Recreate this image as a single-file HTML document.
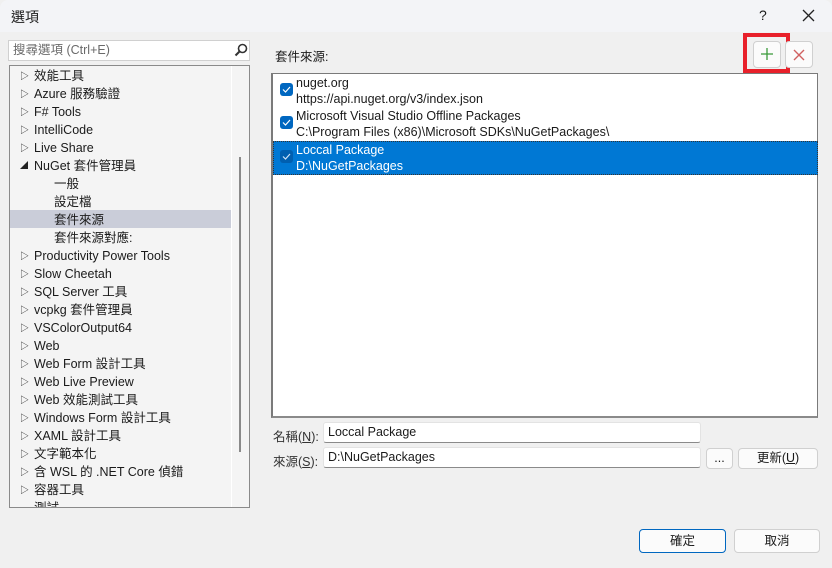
<!DOCTYPE html>
<html><head><meta charset="utf-8"><style>
*{box-sizing:border-box;margin:0;padding:0}
body{width:832px;height:568px;overflow:hidden;background:#f0f0f0;font-family:"Liberation Sans","Noto Sans CJK TC",sans-serif;font-size:12.5px;color:#1a1a1a;position:relative}
.abs{position:absolute}
.title{left:0;top:0;width:832px;height:32px;background:#f3f4f7;border-radius:8px 8px 0 0}
.tree{left:9px;top:65px;width:241px;height:443px;background:#f4f4f4;border:1px solid #8a8a8a;overflow:hidden}
.ti{position:absolute;left:0;height:18px;line-height:18px;width:222px;white-space:nowrap}
.ti .ar{position:absolute;left:10px;top:0;font-size:9px;color:#222}
.ti .t{position:absolute;left:24px}
.ti .s{position:absolute;left:44px}
.inp{background:#fff;border:1px solid #e3e3e3;border-bottom:1px solid #8a8a8a;border-radius:3px;padding-left:4px;line-height:19px;height:21px}
.btn{background:#fbfbfb;border:1px solid #d0d0d0;border-radius:4px;text-align:center}
.cb{position:absolute;left:7px;width:13px;height:13px;border-radius:3px;background:#0067c0}
.cb svg{position:absolute;left:2px;top:3px}
</style></head><body>
<div class="abs title"></div>
<div class="abs" style="left:11px;top:7px;font-size:14px">選項</div>
<div class="abs" style="left:759px;top:7px;font-size:14px">?</div>
<svg class="abs" style="left:802px;top:9px" width="13" height="13"><path d="M1 1L12 12M12 1L1 12" stroke="#222" stroke-width="1.3"/></svg>

<div class="abs inp" style="left:8px;top:40px;width:242px;height:21px;border-color:#d0d0d0;color:#6a6a6a;border-radius:0">搜尋選項 (Ctrl+E)</div>
<svg class="abs" style="left:234px;top:43px" width="14" height="14"><circle cx="8.5" cy="5.5" r="4" fill="none" stroke="#333" stroke-width="1.6"/><path d="M5.5 8.5L1.5 12.5" stroke="#333" stroke-width="2"/></svg>

<div class="abs tree">
<div class="abs" style="left:0;top:144px;width:221px;height:18px;background:#cacdd9"></div>
<div class="abs" style="left:229px;top:91px;width:2px;height:295px;background:#8a8a8a"></div>
<div class="abs" style="left:221px;top:0;width:1px;height:443px;background:#fff"></div>
<div class="ti" style="top:1px"><span class="ar">▷</span><span class="t">效能工具</span></div>
<div class="ti" style="top:19px"><span class="ar">▷</span><span class="t">Azure 服務驗證</span></div>
<div class="ti" style="top:37px"><span class="ar">▷</span><span class="t">F# Tools</span></div>
<div class="ti" style="top:55px"><span class="ar">▷</span><span class="t">IntelliCode</span></div>
<div class="ti" style="top:73px"><span class="ar">▷</span><span class="t">Live Share</span></div>
<div class="ti" style="top:91px"><span class="ar" style="font-size:8px">◢</span><span class="t">NuGet 套件管理員</span></div>
<div class="ti" style="top:109px"><span class="s">一般</span></div>
<div class="ti" style="top:127px"><span class="s">設定檔</span></div>
<div class="ti" style="top:145px"><span class="s">套件來源</span></div>
<div class="ti" style="top:163px"><span class="s">套件來源對應:</span></div>
<div class="ti" style="top:181px"><span class="ar">▷</span><span class="t">Productivity Power Tools</span></div>
<div class="ti" style="top:199px"><span class="ar">▷</span><span class="t">Slow Cheetah</span></div>
<div class="ti" style="top:217px"><span class="ar">▷</span><span class="t">SQL Server 工具</span></div>
<div class="ti" style="top:235px"><span class="ar">▷</span><span class="t">vcpkg 套件管理員</span></div>
<div class="ti" style="top:253px"><span class="ar">▷</span><span class="t">VSColorOutput64</span></div>
<div class="ti" style="top:271px"><span class="ar">▷</span><span class="t">Web</span></div>
<div class="ti" style="top:289px"><span class="ar">▷</span><span class="t">Web Form 設計工具</span></div>
<div class="ti" style="top:307px"><span class="ar">▷</span><span class="t">Web Live Preview</span></div>
<div class="ti" style="top:325px"><span class="ar">▷</span><span class="t">Web 效能測試工具</span></div>
<div class="ti" style="top:343px"><span class="ar">▷</span><span class="t">Windows Form 設計工具</span></div>
<div class="ti" style="top:361px"><span class="ar">▷</span><span class="t">XAML 設計工具</span></div>
<div class="ti" style="top:379px"><span class="ar">▷</span><span class="t">文字範本化</span></div>
<div class="ti" style="top:397px"><span class="ar">▷</span><span class="t">含 WSL 的 .NET Core 偵錯</span></div>
<div class="ti" style="top:415px"><span class="ar">▷</span><span class="t">容器工具</span></div>
<div class="ti" style="top:433px"><span class="t">測試</span></div>
</div>

<div class="abs" style="left:275px;top:46px">套件來源:</div>
<div class="abs" style="left:743px;top:33px;width:47px;height:40px;border:4px solid #e8202a"></div>
<div class="abs btn" style="left:753px;top:41px;width:28px;height:27px"></div>
<svg class="abs" style="left:760px;top:47px" width="14" height="14"><path d="M7 1V13M1 7H13" stroke="#3a9a3a" stroke-width="1.3"/></svg>
<div class="abs btn" style="left:785px;top:41px;width:28px;height:27px"></div>
<svg class="abs" style="left:793px;top:49px" width="12" height="12"><path d="M1 1L11 11M11 1L1 11" stroke="#d06060" stroke-width="1.4"/></svg>

<div class="abs" style="left:271px;top:73px;width:547px;height:345px;background:#fff;border:1px solid #7a7a7a;border-bottom:2px solid #8a8a8a;border-left:2px solid #7a7a7a">
 <div class="abs" style="left:23px;top:1px;line-height:16px">nuget.org<br>https://api.nuget.org/v3/index.json</div>
 <div class="cb" style="top:9px"><svg width="9" height="7"><path d="M1 3.5L3.5 6L8 1" stroke="#fff" stroke-width="1.2" fill="none"/></svg></div>
 <div class="abs" style="left:23px;top:34px;line-height:16px">Microsoft Visual Studio Offline Packages<br>C:\Program Files (x86)\Microsoft SDKs\NuGetPackages\</div>
 <div class="cb" style="top:42px"><svg width="9" height="7"><path d="M1 3.5L3.5 6L8 1" stroke="#fff" stroke-width="1.2" fill="none"/></svg></div>
 <div class="abs" style="left:0;top:67px;width:545px;height:34px;background:#0078d4;border:1px dotted #333"></div>
 <div class="abs" style="left:23px;top:68px;line-height:16px;color:#fff">Loccal Package<br>D:\NuGetPackages</div>
 <div class="cb" style="top:76px;background:#005fb0"><svg width="9" height="7"><path d="M1 3.5L3.5 6L8 1" stroke="#cfe3f7" stroke-width="1.2" fill="none"/></svg></div>
</div>

<div class="abs" style="left:273px;top:426px;color:#333">名稱(<u>N</u>):</div>
<div class="abs inp" style="left:323px;top:422px;width:378px">Loccal Package</div>
<div class="abs" style="left:273px;top:451px;color:#333">來源(<u>S</u>):</div>
<div class="abs inp" style="left:323px;top:447px;width:378px">D:\NuGetPackages</div>
<div class="abs btn" style="left:706px;top:448px;width:27px;height:21px;line-height:19px">...</div>
<div class="abs btn" style="left:738px;top:448px;width:80px;height:21px;line-height:19px">更新(<u>U</u>)</div>

<div class="abs btn" style="left:639px;top:529px;width:87px;height:24px;line-height:22px;border:1px solid #0067c0">確定</div>
<div class="abs btn" style="left:734px;top:529px;width:86px;height:24px;line-height:22px">取消</div>
</body></html>
